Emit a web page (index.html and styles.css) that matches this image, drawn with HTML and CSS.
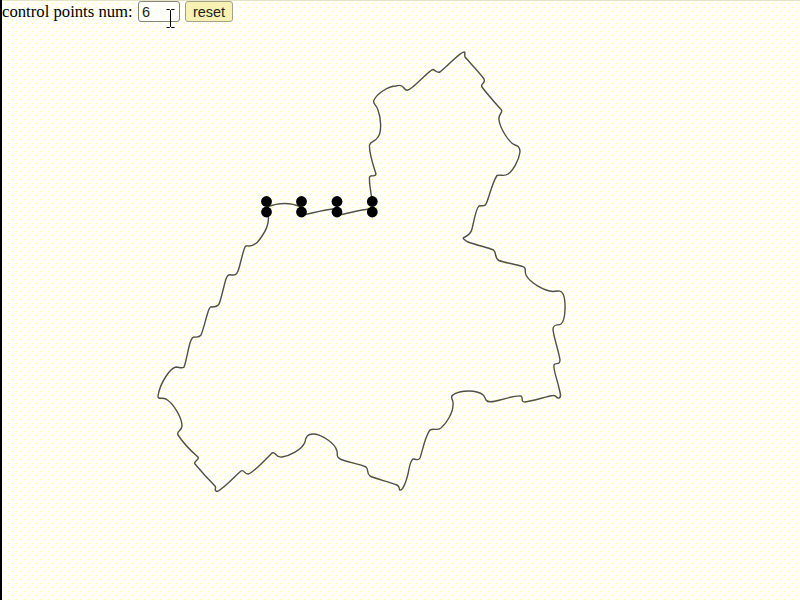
FILE: index.html
```html
<!DOCTYPE html>
<html lang="en">
<head>
<meta charset="utf-8">
<title>control points</title>
<link rel="stylesheet" href="styles.css">
</head>
<body>
<div class="page">
  <div class="toolbar">
    <label class="label" for="num">control points num:</label>
    <div class="field">
      <input class="input" id="num" type="text" value="6">
      <svg class="cursor" width="11" height="19" viewBox="0 0 11 19"><path d="M1.500 .5H4.500L5.500 1.500L6.500 .5H9.500M5.500 1.500V17.500M1.500 18.500H4.500L5.500 17.500L6.500 18.500H9.500" fill="none" stroke="#000" stroke-width="1"/></svg>
    </div>
    <button class="button" type="button">reset</button>
  </div>
  <svg class="stage" width="798" height="578" viewBox="2 22 798 578">
    <path class="curve" d="M268 214C270 224 265 232 260 239C256 245 252 246 249 246C247 246 246 245 245 247C243 251 240 266 238 271C236 276 234 275 231 275C228 274 227 276 226 279C224 285 221 300 219 304C217 307 215 307 212 307C210 306 209 309 208 312C206 318 203 331 201 335C199 338 196 337 194 337C192 337 191 340 190 343C188 349 186 363 184 367C182 369 179 367 176 367C170 368 160 383 158 396C158 400 162 397 166 399C174 404 182 418 182 426C182 431 176 431 178 435C182 441 191 451 198 457C200 460 193 461 195 464C200 470 208 479 215 486C217 489 213 490 217 491.500C222 490 235 476 241 471C244 469 244 474 248 474C253 473 265 460 272 453C276 451 275 458 282 457C289 456 302 450 305 442C306 436 308 434 313 434C321 434 335 443 337 451C338 458 336 456 340 459C347 462 360 464 366 467C369 469 366 473 370 476C376 479 390 482 397 485C401 487 398 491 401 490C404 488 406 482 408 474C409 468 411 458 414 459C417 460 419 460 420 458C422 453 425 436 430 430C434 428 437 431 441 428C446 424 453 413 453 405C454 399 449 397 453 395C458 391 470 390 477 392C484 394 484 396 486 400C488 403 493 402 500 400C507 398 518 395 521 396C524 398 520 402 525 402C533 401 548 396 553 395.500C557 395 556 399 559 398C562 397 560 393 559 388C557 379 553 369 554 365C555 362 560 366 560 360C559 352 553 335 553 329C554 323 558 326 561 324C566 320 566 300 563 294C561 290 558 291 553 291.500C545 291 530 283 526 275C524 270 527 268 523 266.700C516 264 505 263 499 260.500C494 258 497 253 493.500 250C487 247 475 245 467 241.500C463 239 462 238 465 237C469 235 471 233 472 229C474 221 476 208 479 206C482 205 485 207 486 204C489 198 492 183 497 175.500C500 174 504 177 508 174C513 171 519 160 520 152C520 147 518 146 515 145C509 143 500 128 499 120C498 114 503 113 501.500 110C497 105 487 94 482 87C480 83 486 84 484 79C480 73 471 64 465 57C464 54 466 52 464 52C460 52 449 65 440 72C437 73 436 71 433 69.500C431 69 419 82 412 87.500C408 91 406 91 404 88C402 85 399 85 396 86C388 86 377 94 374 100C372 104 377 105 378 110C381 118 382 132 378 137C375 142 371 141 369.500 145C369 152 374 168 376 174C375 178 371 174 369.500 177C369 184 371 192 372 200"/>
    <path class="curve" d="M267 207C280 202 292 203 301 207M303 215C313 213 323 210 333 209M339 215C349 213 359 210 370 209"/>
    <g class="dots">
      <circle cx="266.500" cy="201.500" r="5.400"/><circle cx="266.500" cy="212" r="5.400"/>
      <circle cx="301.500" cy="201.500" r="5.400"/><circle cx="301.500" cy="212" r="5.400"/>
      <circle cx="337" cy="201.500" r="5.400"/><circle cx="337" cy="212" r="5.400"/>
      <circle cx="372.300" cy="201.500" r="5.400"/><circle cx="372.300" cy="212" r="5.400"/>
    </g>
  </svg>
</div>
</body>
</html>
```
FILE: styles.css
```css
html, body {
  margin: 0;
  height: 100%;
  overflow: hidden;
}

.page {
  box-sizing: border-box;
  height: 600px;
  border-left: 2px solid #000;
  background-color: #fffffe;
  background-image:
    conic-gradient(from 270deg at 1px 1px, #ffff70 25%, transparent 0),
    conic-gradient(from 270deg at 1px 1px, #ffff80 25%, transparent 0);
  background-size: 8px 8px;
  background-position: 2px 3px, 6px 7px;
}

.toolbar {
  display: flex;
  align-items: flex-start;
  gap: 5px;
  height: 22px;
  box-sizing: border-box;
  border-top: 1px solid #e6e4c6;
}

.label {
  font: 16.7px/21px "Liberation Serif", serif;
  color: #000;
  width: 131px;
  white-space: nowrap;
}

.field {
  position: relative;
  display: flex;
}

.input {
  box-sizing: border-box;
  width: 42px;
  height: 21px;
  padding: 0 3px;
  border: 1px solid #85857a;
  border-radius: 3px;
  background: #fffffa;
  font: 14.500px "Liberation Sans", sans-serif;
  color: #222;
  outline: none;
}

.cursor {
  position: absolute;
  left: 27px;
  top: 8px;
}

.button {
  box-sizing: border-box;
  width: 48px;
  height: 21px;
  padding: 0;
  border: 1px solid #a3a18a;
  border-radius: 3px;
  background: #f7f2b4;
  font: 14.500px "Liberation Sans", sans-serif;
  color: #222;
}

.stage {
  display: block;
}

.curve {
  fill: none;
  stroke: #505045;
  stroke-width: 1.4;
}

.dots {
  fill: #000;
}
```
